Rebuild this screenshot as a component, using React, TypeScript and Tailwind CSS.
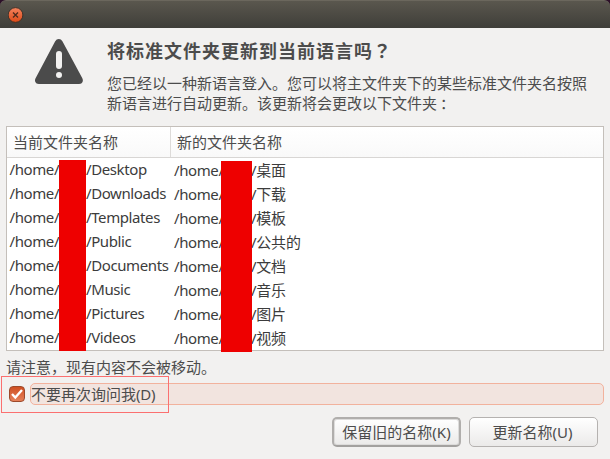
const folders = [
  { from: "Desktop", to: "桌面" },
  { from: "Downloads", to: "下载" },
  { from: "Templates", to: "模板" },
  { from: "Public", to: "公共的" },
  { from: "Documents", to: "文档" },
  { from: "Music", to: "音乐" },
  { from: "Pictures", to: "图片" },
  { from: "Videos", to: "视频" },
];

function TitleBar() {
  return (
    <div className="h-7 shrink-0 bg-[#2c1028]">
      <div className="flex h-7 items-center rounded-t-md border-t border-[#6b675d] bg-linear-to-b from-[#5a574e] to-[#3f3e39] pl-2">
        <svg width="16" height="16" viewBox="0 0 16 16">
          <defs>
            <linearGradient id="close" x1="0" y1="0" x2="0" y2="1">
              <stop offset="0" stopColor="#f5835e" />
              <stop offset="1" stopColor="#dd4a17" />
            </linearGradient>
          </defs>
          <circle cx="7.5" cy="8" r="7.4" fill="url(#close)" stroke="#3a3129" />
          <path d="M5 5.500l5 5M10 5.500l-5 5" stroke="#4c2a1d" strokeWidth="1.3" />
        </svg>
      </div>
    </div>
  );
}

function WarningIcon() {
  return (
    <svg className="mt-[11px] shrink-0" width="48" height="46" viewBox="0 0 48 46">
      <path
        d="M20.2 2.2Q21.5 0 23.8 0Q26.1 0 27.4 2.2L47.2 39Q48.8 42.2 46.6 44.2Q45.8 45 44 45H4Q2.200 45 1.200 44.200Q-1 42.200 .700 39Z"
        fill="#4b4b4b"
      />
      <rect x="21" y="12" width="6" height="18" rx="3" fill="#f2f1f0" />
      <circle cx="24" cy="36" r="3" fill="#f2f1f0" />
    </svg>
  );
}

function FolderTable() {
  return (
    <div className="relative mx-[6px] mt-[11px] h-[225px] shrink-0 border border-[#c4bfba] bg-white">
      <div className="flex h-[31px] border-b border-[#d8d6d4] bg-linear-to-b from-white to-[#f9f9f9] leading-[30px]">
        <div className="w-[164px] border-r border-[#dddbd9] pl-[6px]">当前文件夹名称</div>
        <div className="pl-[6px]">新的文件夹名称</div>
      </div>
      {folders.map((f) => (
        <div key={f.from} className="flex h-6 whitespace-nowrap leading-[22px] tracking-[-0.4px] text-[#3c3c3c]">
          <span className="w-[79px] pl-[2.500px]">/home/</span>
          <span className="w-[88px]">/{f.from}</span>
          <span className="w-[77px] pt-px">/home/</span>
          <span className="pt-px">
            /<span className="tracking-[-0.100px]">{f.to}</span>
          </span>
        </div>
      ))}
      <div className="absolute top-[33px] left-[52px] h-[191px] w-[27px] bg-[#ee0000]" />
      <div className="absolute top-[34px] left-[214px] h-[191px] w-[31px] bg-[#ee0000]" />
    </div>
  );
}

export default function App() {
  return (
    <div className="flex h-[459px] w-[610px] flex-col overflow-hidden bg-[#f2f1f0] font-['Noto_Sans','Noto_Sans_CJK_SC',sans-serif] text-[15px] text-[#4c4c4c]">
      <TitleBar />
      <div className="flex h-[87px] shrink-0 pl-[35px]">
        <WarningIcon />
        <div className="pl-6 whitespace-nowrap">
          <h1 className="mt-[9px] text-[18px] leading-[26px] font-bold tracking-[1px]">
            将标准文件夹更新到当前语言吗
            <span className="font-['Noto_Sans_CJK_TC',sans-serif]">？</span>
          </h1>
          <p className="mt-[9px] leading-5">
            您已经以一种新语言登入。您可以将主文件夹下的某些标准文件夹名按照
            <br />
            新语言进行自动更新。该更新将会更改以下文件夹
            <span className="pl-[3px]">：</span>
          </p>
        </div>
      </div>
      <FolderTable />
      <p className="mt-[6px] ml-[6px] h-5 shrink-0 leading-5">请注意，现有内容不会被移动。</p>
      <div className="relative mt-[6px] flex h-[22px] shrink-0 items-center pr-[6px] pl-[9px]">
        <div className="mr-[5px] flex size-4 items-center justify-center rounded-[4px] border border-[#9c4a2c] bg-linear-to-b from-[#cf4f20] to-[#e58059]">
          <svg className="shrink-0" width="14" height="14" viewBox="0 0 14 14">
            <path d="M2 7L5.300 10.500L12 3" fill="none" stroke="#fff" strokeWidth="2.400" />
          </svg>
        </div>
        <div className="h-[22px] flex-1 rounded-[5px] border border-[#f2b29d] bg-[#f2e4df] leading-[20px]">
          不要再次询问我<span className="tracking-[-0.2px]">(D)</span>
        </div>
        <div className="absolute -top-[7px] left-px h-[37px] w-[168px] border border-[#fb7070]" />
      </div>
      <div className="mt-3 flex shrink-0 justify-end gap-2 pr-3">
        <button className="h-[30px] w-[129px] rounded-[5px] border-2 border-[#b0aeac] border-b-[#a3a19f] bg-linear-to-b from-white to-[#ebeae9] leading-[26px] shadow-[inset_0_0_0_1px_#dddcdb]">
          保留旧的名称(K)
        </button>
        <button className="h-[30px] w-[129px] rounded-[5px] border border-[#b5b2b0] bg-linear-to-b from-white to-[#ebeae9] pr-[2px] leading-7">
          更新名称(U)
        </button>
      </div>
    </div>
  );
}
